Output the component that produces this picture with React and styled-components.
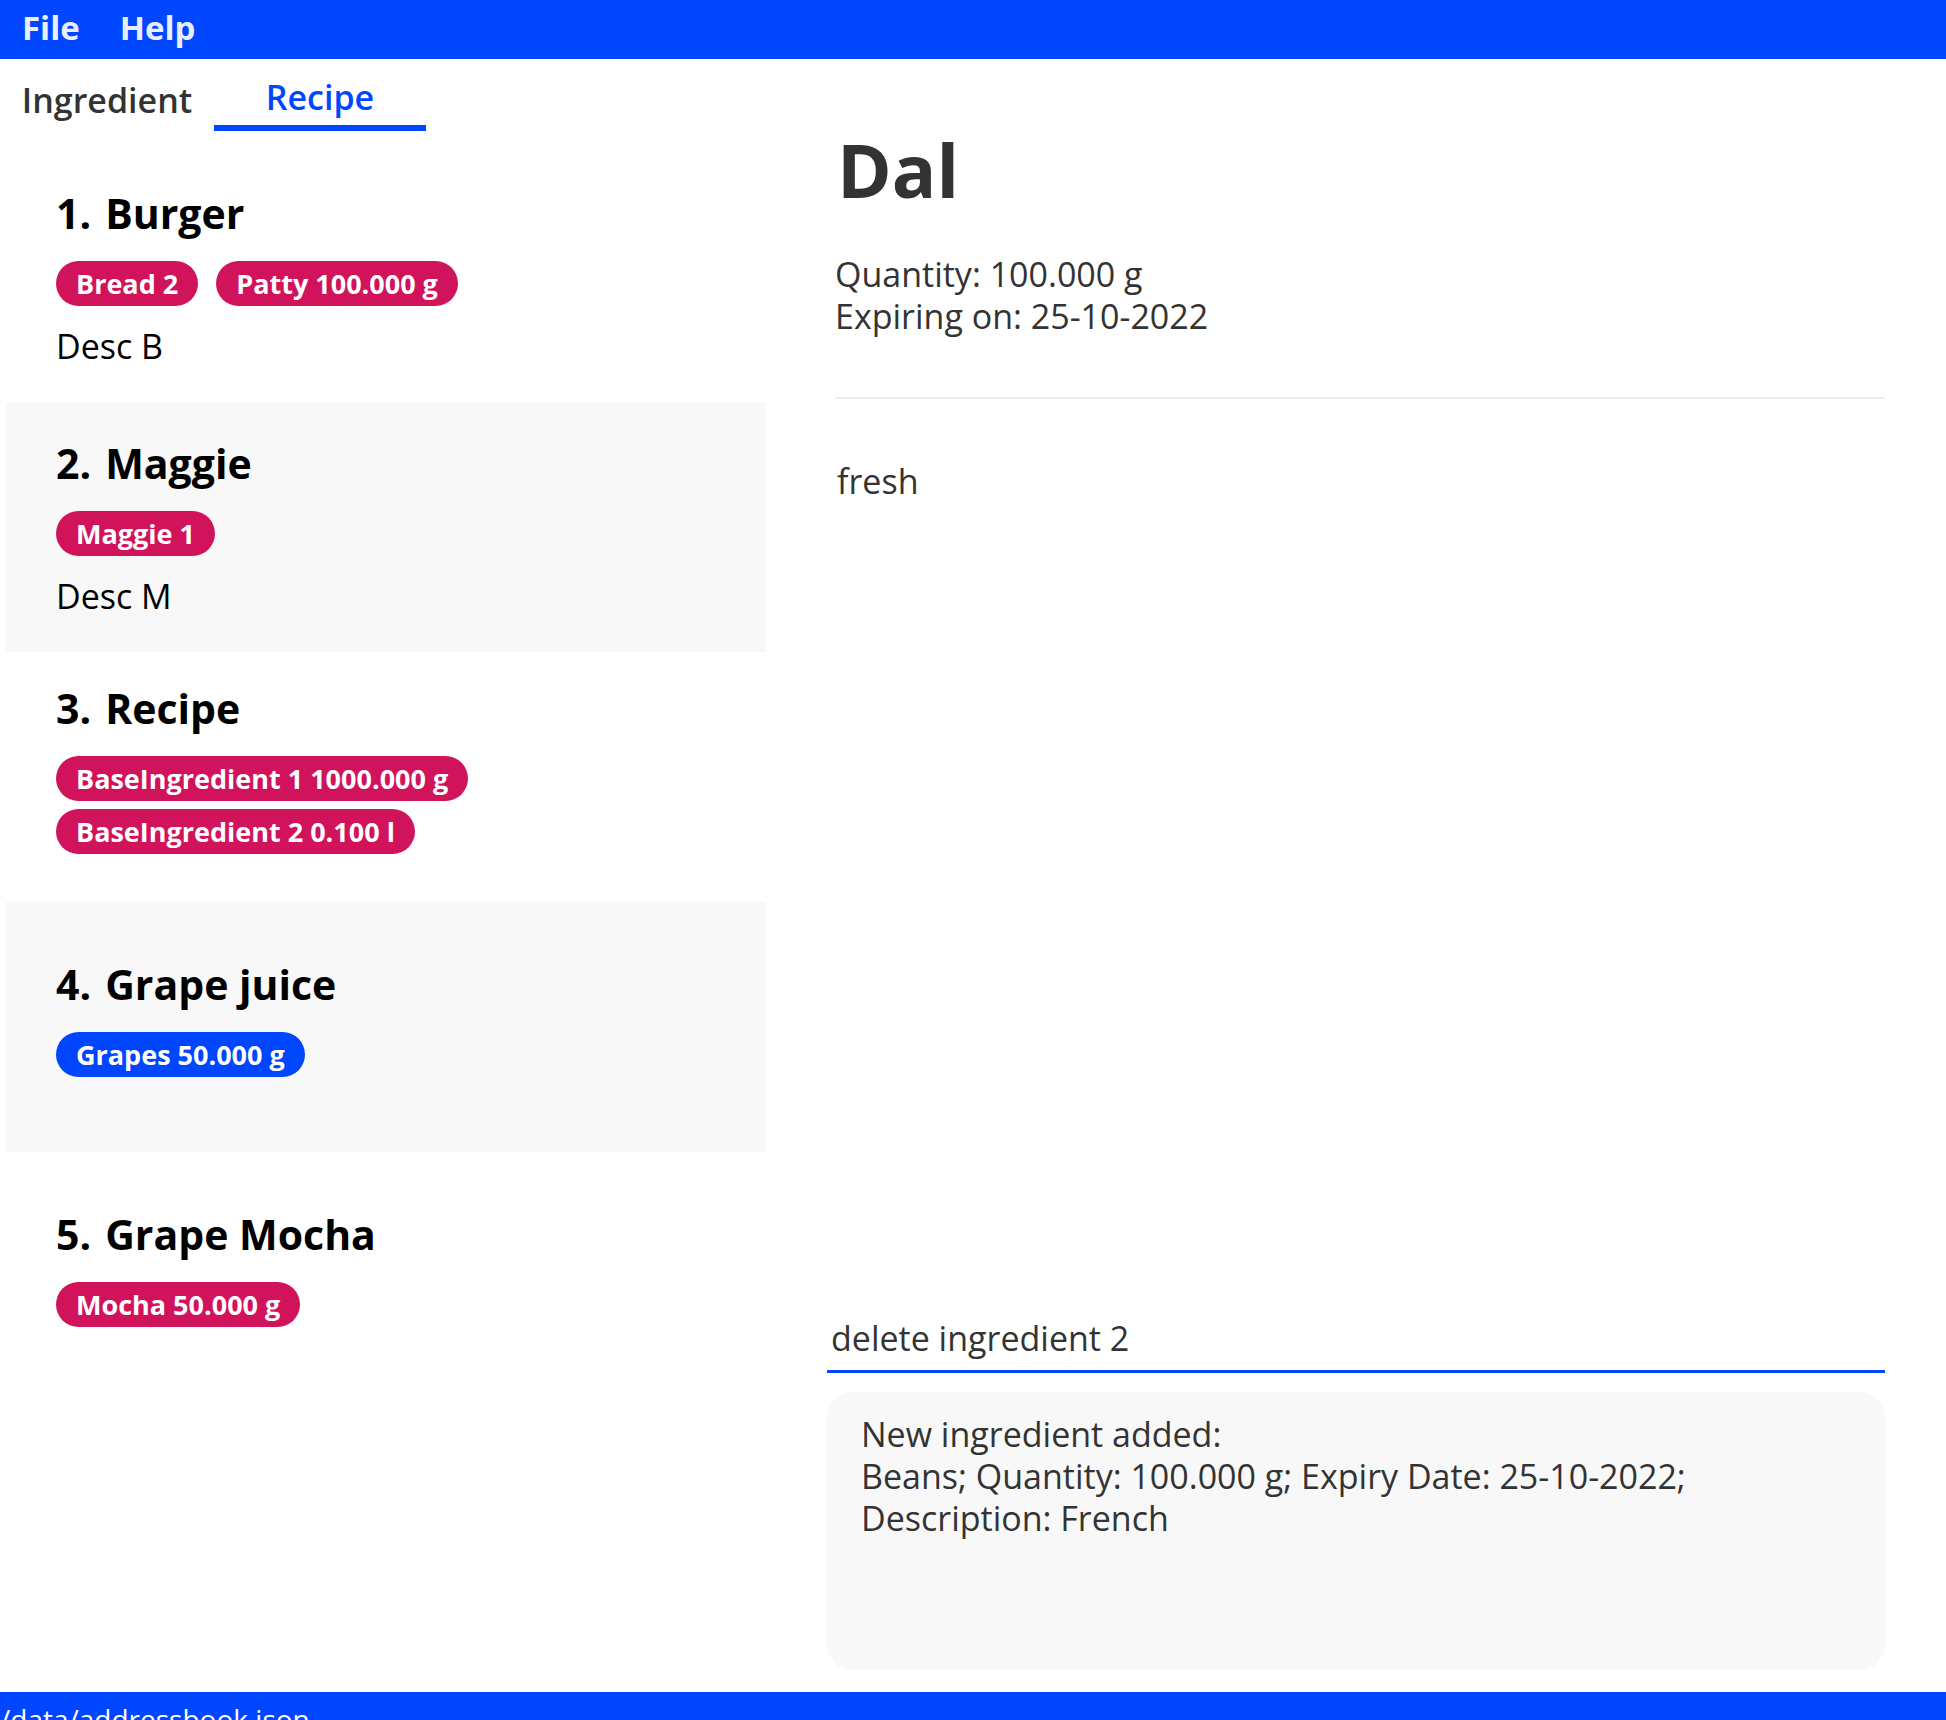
import styled, { createGlobalStyle } from "styled-components";

const GlobalStyle = createGlobalStyle`
  html, body {
    margin: 0;
    padding: 0;
    background: #ffffff;
  }
  body {
    font-family: "Open Sans", "Liberation Sans", sans-serif;
  }
`;

const AppShell = styled.div`
  width: 1946px;
  height: 1720px;
  display: flex;
  flex-direction: column;
  overflow: hidden;
`;

const MenuBar = styled.div`
  height: 59px;
  flex-shrink: 0;
  box-sizing: border-box;
  display: flex;
  align-items: center;
  gap: 40px;
  padding: 0 0 4px 22px;
  background-color: #0046ff;
`;

const MenuItem = styled.span`
  font-size: 33px;
  font-weight: 700;
  color: #e9eeff;
`;

const Main = styled.div`
  flex: 1;
  display: flex;
  min-height: 0;
`;

const LeftPane = styled.div`
  width: 760px;
  padding-left: 6px;
  display: flex;
  flex-direction: column;
`;

const TabBar = styled.div`
  display: flex;
  height: 72px;
  margin-left: -6px;
`;

const Tab = styled.div`
  width: ${(p) => p.$w}px;
  display: flex;
  align-items: center;
  justify-content: center;
  font-size: 34px;
  font-weight: 600;
  color: ${(p) => (p.$active ? "#0046ff" : "#333333")};
  border-bottom: 6px solid ${(p) => (p.$active ? "#0046ff" : "transparent")};
  padding-top: ${(p) => (p.$active ? "10px" : "15px")};
  box-sizing: border-box;
`;

const List = styled.div`
  margin-top: 21px;
  display: flex;
  flex-direction: column;
`;

const Cell = styled.div`
  height: 250px;
  box-sizing: border-box;
  padding-left: 50px;
  display: flex;
  flex-direction: column;
  justify-content: center;
  background-color: ${(p) => (p.$alt ? "#f8f8f8" : "#ffffff")};
`;

const CellTitle = styled.div`
  font-size: 41px;
  font-weight: 700;
  color: #000000;
  line-height: 50px;
  margin-bottom: 23px;

  span {
    margin-right: 14px;
  }
`;

const Tags = styled.div`
  display: flex;
  flex-wrap: wrap;
  gap: 8px 18px;
  max-width: 600px;
`;

const Tag = styled.span`
  height: 45px;
  display: inline-flex;
  align-items: center;
  padding: 0 20px;
  border-radius: 23px;
  font-size: 27px;
  font-weight: 700;
  color: #ffffff;
  background-color: ${(p) => (p.$blue ? "#0046ff" : "#d0135a")};
`;

const Desc = styled.div`
  font-size: 34px;
  color: #000000;
  line-height: 40px;
  margin-top: ${(p) => (p.$empty ? "18px" : "20px")};
  height: ${(p) => (p.$empty ? "0" : "40px")};
`;

const RightPane = styled.div`
  flex: 1;
  display: flex;
  flex-direction: column;
  margin-left: 61px;
  margin-right: 61px;
  padding-bottom: 22px;
`;

const Details = styled.div`
  padding-left: 8px;
`;

const Title = styled.h1`
  margin: 66px 0 0 2px;
  font-size: 74px;
  font-weight: 700;
  line-height: 90px;
  color: #333333;
`;

const Field = styled.div`
  font-size: 34px;
  line-height: 42px;
  color: #333333;
  font-weight: 400;
  &:first-of-type {
    margin-top: 38px;
  }
`;

const Separator = styled.hr`
  border: none;
  height: 2px;
  background-color: #e9eef6;
  margin: 60px 0 0 0;
`;

const Description = styled.div`
  margin-top: 62px;
  padding-left: 2px;
  font-size: 34px;
  line-height: 40px;
  color: #333333;
`;

const CommandBox = styled.div`
  margin-top: auto;
  height: 56px;
  box-sizing: border-box;
  display: flex;
  align-items: center;
  padding: 0 0 12px 4px;
  font-size: 34px;
  color: #333333;
  border-bottom: 3px solid #0046ff;
`;

const ResultBox = styled.div`
  margin-top: 19px;
  height: 278px;
  box-sizing: border-box;
  padding: 21px 34px;
  background-color: #f8f8f8;
  border-radius: 26px;
  font-size: 34px;
  line-height: 42px;
  color: #333333;
`;

const StatusBar = styled.div`
  height: 28px;
  flex-shrink: 0;
  background-color: #0046ff;
  color: #ffffff;
  font-size: 28px;
  line-height: 54px;
  overflow: hidden;
  white-space: nowrap;
`;

const recipes = [
  { name: "Burger", tags: [{ label: "Bread 2" }, { label: "Patty 100.000 g" }], desc: "Desc B" },
  { name: "Maggie", tags: [{ label: "Maggie 1" }], desc: "Desc M" },
  {
    name: "Recipe",
    tags: [{ label: "BaseIngredient 1 1000.000 g" }, { label: "BaseIngredient 2 0.100 l" }],
    desc: "",
  },
  { name: "Grape juice", tags: [{ label: "Grapes 50.000 g", blue: true }], desc: "" },
  { name: "Grape Mocha", tags: [{ label: "Mocha 50.000 g" }], desc: "" },
];

const App = () => {
  return (
    <AppShell>
      <GlobalStyle />
      <MenuBar>
        <MenuItem>File</MenuItem>
        <MenuItem>Help</MenuItem>
      </MenuBar>
      <Main>
        <LeftPane>
          <TabBar>
            <Tab $w={214}>Ingredient</Tab>
            <Tab $w={212} $active>Recipe</Tab>
          </TabBar>
          <List>
            {recipes.map((r, i) => (
              <Cell key={r.name} $alt={i % 2 === 1}>
                <CellTitle>
                  <span>{i + 1}.</span>
                  {r.name}
                </CellTitle>
                <Tags>
                  {r.tags.map((t) => (
                    <Tag key={t.label} $blue={t.blue}>{t.label}</Tag>
                  ))}
                </Tags>
                <Desc $empty={!r.desc}>{r.desc}</Desc>
              </Cell>
            ))}
          </List>
        </LeftPane>
        <RightPane>
          <Details>
            <Title>Dal</Title>
            <Field>Quantity: 100.000 g</Field>
            <Field>Expiring on: 25-10-2022</Field>
            <Separator />
            <Description>fresh</Description>
          </Details>
          <CommandBox>delete ingredient 2</CommandBox>
          <ResultBox>
            New ingredient added:
            <br />
            Beans; Quantity: 100.000 g; Expiry Date: 25-10-2022;
            <br />
            Description: French
          </ResultBox>
        </RightPane>
      </Main>
      <StatusBar>/data/addressbook.json</StatusBar>
    </AppShell>
  );
};

export default App;
